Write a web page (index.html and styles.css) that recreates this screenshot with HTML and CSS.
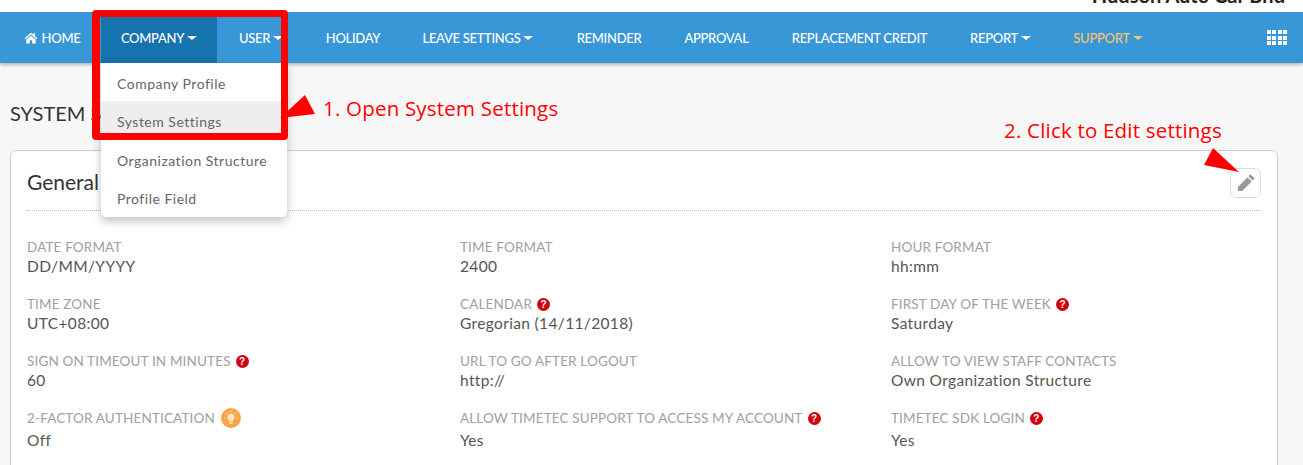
FILE: index.html
```html
<!DOCTYPE html>
<html lang="en">
<head>
<meta charset="utf-8">
<title>System Settings</title>
<link rel="stylesheet" href="styles.css">
</head>
<body>
<div class="topbar"><span class="org">Hudson Auto Car Bhd</span></div>
<nav class="nav">
  <a class="nav-item w-home"><svg class="home" viewBox="0 0 24 20"><path d="M12 1 L1 10.500 L2.500 12 L12 4 L21.500 12 L23 10.500 L19 7 V2 H16 V4.500 Z M12 6 L4 12.500 V19.500 H10 V14 H14 V19.500 H20 V12.500 Z" fill="#fff"/></svg>HOME</a>
  <a class="nav-item active w-company">COMPANY<i class="caret"></i></a>
  <a class="nav-item w-user">USER<i class="caret"></i></a>
  <a class="nav-item w-holiday">HOLIDAY</a>
  <a class="nav-item w-leave">LEAVE SETTINGS<i class="caret"></i></a>
  <a class="nav-item w-reminder">REMINDER</a>
  <a class="nav-item w-approval">APPROVAL</a>
  <a class="nav-item w-credit">REPLACEMENT CREDIT</a>
  <a class="nav-item w-report">REPORT<i class="caret"></i></a>
  <a class="nav-item support w-support">SUPPORT<i class="caret"></i></a>
  <span class="apps">
    <i></i><i></i><i></i><i></i><i></i><i></i><i></i><i></i><i></i><i></i><i></i><i></i>
  </span>
</nav>
<main class="page">
  <h1 class="page-title">SYSTEM SETTINGS</h1>
  <section class="card">
    <header class="card-head">
      <h2 class="card-title">General Settings</h2>
      <button class="edit" type="button" aria-label="Edit">
        <svg viewBox="0 0 18 18" width="20" height="20"><path d="M13 1.200 L16.800 5 L15 6.800 L11.200 3 Z M10.300 3.900 L14.100 7.700 L5.500 16.300 H1.700 V12.500 Z" fill="#999"/></svg>
      </button>
    </header>
    <div class="grid">
      <div class="field"><div class="label">DATE FORMAT</div><div class="value">DD/MM/YYYY</div></div>
      <div class="field"><div class="label">TIME FORMAT</div><div class="value">2400</div></div>
      <div class="field"><div class="label">HOUR FORMAT</div><div class="value">hh:mm</div></div>
      <div class="field"><div class="label">TIME ZONE</div><div class="value">UTC+08:00</div></div>
      <div class="field"><div class="label">CALENDAR<span class="help">?</span></div><div class="value">Gregorian (14/11/2018)</div></div>
      <div class="field"><div class="label">FIRST DAY OF THE WEEK<span class="help">?</span></div><div class="value">Saturday</div></div>
      <div class="field"><div class="label">SIGN ON TIMEOUT IN MINUTES<span class="help">?</span></div><div class="value">60</div></div>
      <div class="field"><div class="label">URL TO GO AFTER LOGOUT</div><div class="value">http://</div></div>
      <div class="field"><div class="label">ALLOW TO VIEW STAFF CONTACTS</div><div class="value">Own Organization Structure</div></div>
      <div class="field tall"><div class="label">2-FACTOR AUTHENTICATION<span class="bulb"><svg viewBox="0 0 20 20" width="20" height="20"><circle cx="10" cy="10" r="10" fill="#f9a44a"/><path d="M10 5.500 a3.700 3.700 0 0 0 -2 6.800 V13.500 H12 V12.300 A3.700 3.700 0 0 0 10 5.500 Z M8.200 14.300 H11.800 V15.800 H8.200 Z" fill="#fde3c0"/><path d="M10 2.800 V4.300 M4.800 5 L6 6.100 M15.200 5 L14 6.100 M3 10 H4.500 M15.500 10 H17" stroke="#fde3c0" stroke-width="1"/></svg></span></div><div class="value">Off</div></div>
      <div class="field tall"><div class="label">ALLOW TIMETEC SUPPORT TO ACCESS MY ACCOUNT<span class="help">?</span></div><div class="value">Yes</div></div>
      <div class="field tall"><div class="label">TIMETEC SDK LOGIN<span class="help">?</span></div><div class="value">Yes</div></div>
    </div>
  </section>
</main>
<ul class="menu">
  <li>Company Profile</li>
  <li class="hover">System Settings</li>
  <li>Organization Structure</li>
  <li>Profile Field</li>
</ul>
<div class="mark-box"></div>
<svg class="arrows" width="1303" height="465" viewBox="0 0 1303 465">
  <polygon points="280,118 305,95 315,114" fill="#ff0000"/>
  <polygon points="1213,148 1204,165 1239,172" fill="#ff0000"/>
</svg>
<div class="note note-one">1. Open System Settings</div>
<div class="note note-two">2. Click to Edit settings</div>
</body>
</html>
```
FILE: styles.css
```css
* { box-sizing: border-box; }
html, body { margin: 0; height: 465px; overflow: hidden; }
body { background: #f7f7f7; font-family: "Lato", sans-serif; color: #555; position: relative; }
.topbar { height: 12px; background: #fff; position: relative; overflow: hidden; }
.org { position: absolute; right: 18px; top: -15px; font: 700 20px/20px "Lato", sans-serif; color: #222; }
.nav { height: 51px; background: #3897d6; display: flex; align-items: stretch; padding-left: 3px; box-shadow: 0 2px 3px rgba(0,0,0,.25); position: relative; }
.nav-item { display: flex; align-items: center; justify-content: center; color: #fff; font: 500 13px "Lato", sans-serif; letter-spacing: -.3px; white-space: nowrap; }
.w-home { width: 98px; }
.w-company { width: 116px; }
.w-user { width: 88px; }
.w-holiday { width: 96px; }
.w-leave { width: 154px; }
.w-reminder { width: 108px; }
.w-approval { width: 107px; }
.w-credit { width: 179px; }
.w-report { width: 103px; }
.w-support { width: 112px; }
.nav-item.active { background: #1673ad; }
.nav-item.support { color: #f8c471; }
.home { width: 14px; height: 12px; margin-right: 4px; }
.caret { display: inline-block; margin-left: 3px; border-top: 4px solid currentColor; border-left: 5px solid transparent; border-right: 5px solid transparent; }
.apps { margin-left: auto; margin-right: 16px; align-self: center; display: grid; grid-template-columns: repeat(4, 4px); grid-auto-rows: 4px; gap: 1.330px; width: 20px; }
.apps i { background: #fff; }
.page { padding: 0 25px 0 10px; }
.page-title { margin: 36px 0 0; height: 28px; font: 400 20px/28px "Lato", sans-serif; color: #333; }
.card { margin-top: 23px; width: 1268px; height: 330px; background: #fff; border: 1px solid #ccc; border-radius: 6px; padding: 17px 16px 0; }
.card-head { display: flex; justify-content: space-between; height: 43px; border-bottom: 1px dotted #bbb; }
.card-title { margin: 0; font: 400 21px/27px "Lato", sans-serif; color: #333; }
.edit { width: 31px; height: 30px; padding: 0; background: #fff; border: 1px solid #ddd; border-radius: 6px; display: flex; align-items: center; justify-content: center; }
.grid { display: grid; grid-template-columns: 433px 431px 1fr; padding-top: 27px; }
.field { height: 57px; }
.label { height: 18px; font-size: 13.5px; line-height: 18px; letter-spacing: .15px; color: #a0a0a0; display: flex; align-items: center; white-space: nowrap; }
.value { height: 21px; font-size: 15.5px; line-height: 21px; color: #555; letter-spacing: .35px; }
.tall .value { margin-top: 3px; }
.help { margin-left: 5px; width: 13px; height: 13px; border-radius: 50%; background: #d0000e; color: #fff; font: 700 10px/13px "Liberation Sans", sans-serif; text-align: center; letter-spacing: 0; }
.bulb { margin-left: 6px; width: 20px; height: 20px; }
.menu { position: absolute; left: 101px; top: 63px; width: 186px; height: 154px; margin: 0; padding: 0; list-style: none; background: #fff; border-radius: 0 0 5px 5px; box-shadow: 0 4px 10px rgba(0,0,0,.25); }
.menu li { height: 38.3px; padding-left: 16px; font-size: 14px; line-height: 41px; letter-spacing: .5px; color: #666; white-space: nowrap; }
.menu li.hover { background: #eee; }
.mark-box { position: absolute; left: 92px; top: 10px; width: 196px; height: 130px; border: 7px solid #ff0000; border-left-width: 8px; border-radius: 4px; }
.arrows { position: absolute; left: 0; top: 0; pointer-events: none; }
.note { position: absolute; color: #ff0000; font: 400 20.5px/28px "Open Sans", sans-serif; letter-spacing: .2px; white-space: nowrap; }
.note-one { left: 323px; top: 94px; }
.note-two { left: 1004px; top: 116px; }
```
